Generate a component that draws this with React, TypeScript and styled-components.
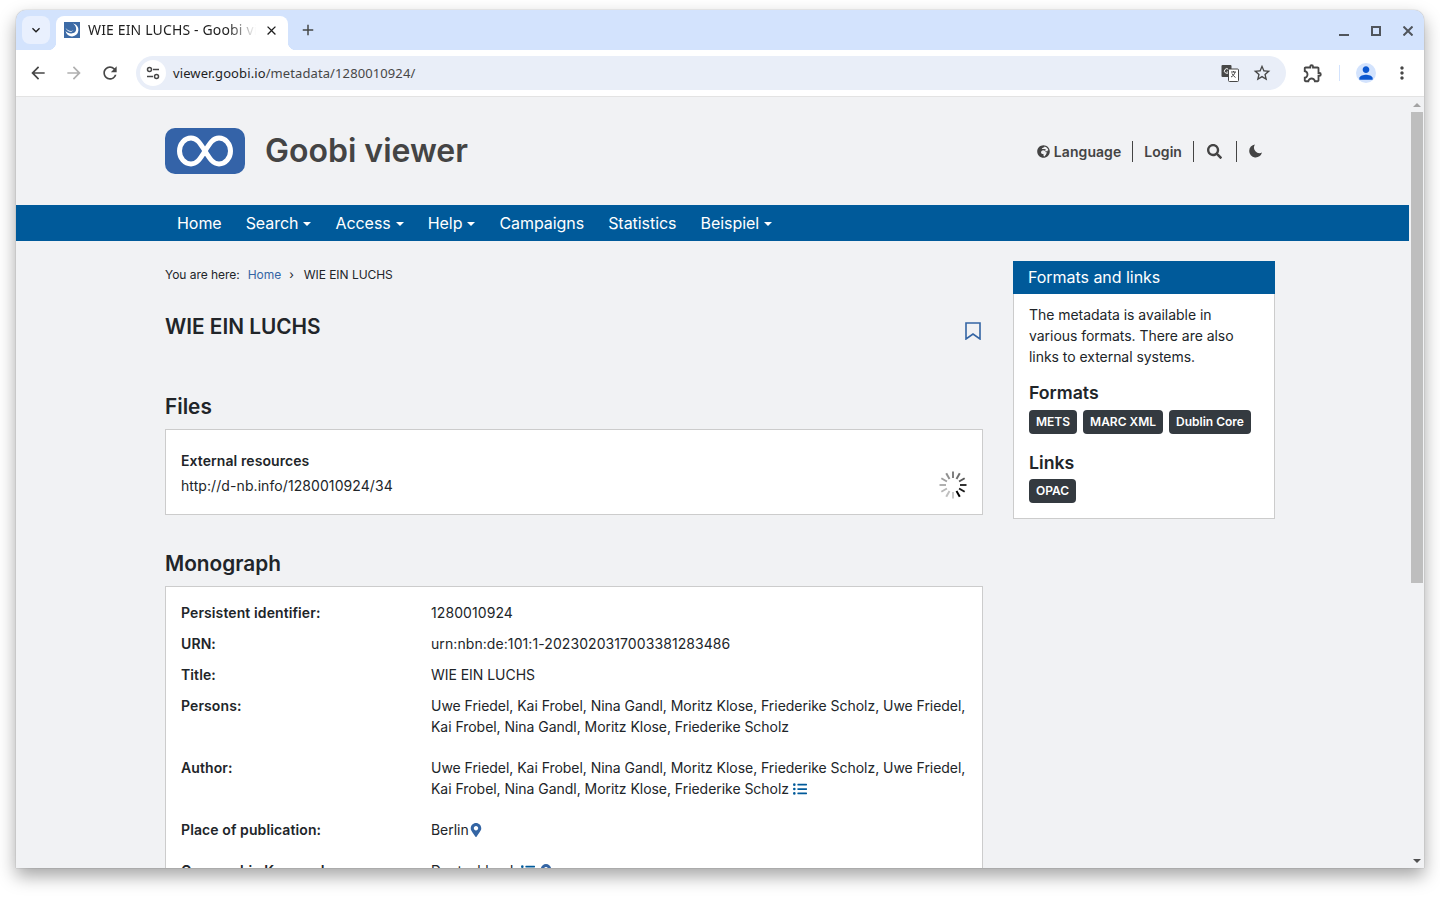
import React from 'react';
import styled, { createGlobalStyle } from 'styled-components';
import { FaGlobeAfrica, FaSearch, FaListUl, FaMapMarkerAlt } from 'react-icons/fa';
import { MdArrowBack, MdArrowForward, MdRefresh, MdStarBorder, MdOutlineExtension, MdPerson, MdMoreVert, MdClose, MdAdd, MdKeyboardArrowDown } from 'react-icons/md';

const GlobalStyle = createGlobalStyle`
    html, body {
        height: 100%;
        margin: 0;
        padding: 0;
        background: #ffffff;
    }
    #root {
        height: 100%;
        padding-top: 10px;
    }
    * {
        box-sizing: border-box;
    }
`;

const BrowserWindow = styled.div`
    width: 1408px;
    height: 858px;
    margin: 0 16px;
    display: flex;
    flex-direction: column;
    border-radius: 10px 10px 0 0;
    overflow: hidden;
    background: #f1f2f4;
    box-shadow: 0 0 1px rgba(0, 0, 0, 0.5), 0 8px 18px rgba(0, 0, 0, 0.36);
`;

const TabStrip = styled.div`
    height: 40px;
    flex: none;
    display: flex;
    align-items: flex-start;
    padding: 6px 0 0 6px;
    background: #d3e3fd;
    font-family: "Noto Sans", sans-serif;
`;

const TabSearch = styled.div`
    width: 28px;
    height: 28px;
    display: flex;
    align-items: center;
    justify-content: center;
    border-radius: 8px;
    background: #e9f0fe;
    color: #1f1f1f;
    font-size: 16px;
`;

const Tab = styled.div`
    position: relative;
    width: 232px;
    height: 34px;
    margin-left: 6px;
    padding: 0 8px 6px;
    display: flex;
    align-items: center;
    background: #ffffff;
    border-radius: 8px 8px 0 0;

    &::before,
    &::after {
        content: '';
        position: absolute;
        bottom: 0;
        width: 8px;
        height: 8px;
    }

    &::before {
        left: -8px;
        background: radial-gradient(circle at 0 0, #d3e3fd 8px, #ffffff 8.5px);
    }

    &::after {
        right: -8px;
        background: radial-gradient(circle at 100% 0, #d3e3fd 8px, #ffffff 8.5px);
    }
`;

const TabTitle = styled.span`
    width: 168px;
    margin: -2px 0 0 8px;
    font-size: 14px;
    letter-spacing: 0.15px;
    color: #1f1f1f;
    white-space: nowrap;
    overflow: hidden;
    mask-image: linear-gradient(to right, #000 140px, transparent 168px);
`;

const TabClose = styled.span`
    margin-left: 8px;
    display: flex;
    font-size: 15px;
    color: #1f1f1f;
`;

const NewTab = styled.span`
    margin: 5px 0 0 11px;
    display: flex;
    font-size: 18px;
    color: #444746;
`;

const WindowControls = styled.div`
    margin-left: auto;
    display: flex;
    gap: 22px;
    padding: 5px 11px 0 0;
    color: #50555c;
`;

const ControlIcon = styled.svg`
    width: 10px;
    height: 10px;
    display: block;
    margin: 5px 0;
    fill: none;
    stroke: currentColor;
    stroke-width: 2;
`;

const Toolbar = styled.div`
    height: 47px;
    flex: none;
    display: flex;
    align-items: center;
    padding: 0 0 1px 0;
    background: #ffffff;
    border-bottom: 1px solid #e3e3e3;
    color: #474747;
`;

const ToolButton = styled.span<{ $width?: number; $muted?: boolean; $large?: boolean }>`
    width: ${(p) => p.$width ?? 36}px;
    flex: none;
    display: flex;
    justify-content: center;
    font-size: ${(p) => (p.$large ? 22 : 20)}px;
    color: ${(p) => (p.$muted ? '#b0b0b0' : '#474747')};
`;

const MenuButton = styled(ToolButton)`
    margin-left: 4px;
`;

const NavButtons = styled.div`
    display: flex;
    padding-left: 4px;
`;

const Omnibox = styled.div`
    width: 1150px;
    height: 34px;
    flex: none;
    margin: 0 9px 0 8px;
    display: flex;
    align-items: center;
    padding: 0 14px 0 4px;
    border-radius: 17px;
    background: #e9eef8;
    font-family: "Noto Sans", sans-serif;
    font-size: 13px;
    letter-spacing: 0.1px;
`;

const SiteChip = styled.span`
    width: 26px;
    height: 26px;
    display: flex;
    align-items: center;
    justify-content: center;
    border-radius: 50%;
    background: #ffffff;
`;

const Url = styled.span`
    margin-left: 7px;
    color: #474747;

    b {
        font-weight: 400;
        color: #1f1f1f;
    }
`;

const OmniActions = styled.div`
    margin-left: auto;
    display: flex;
    align-items: center;
    gap: 13px;
`;

const ToolbarDivider = styled.span`
    width: 1px;
    height: 16px;
    flex: none;
    margin: 0 16px 0 8px;
    background: #d3e3fd;
`;

const Avatar = styled.span`
    width: 20px;
    height: 20px;
    flex: none;
    display: flex;
    align-items: flex-end;
    justify-content: center;
    overflow: hidden;
    border-radius: 50%;
    background: #d3e3fd;
    color: #0b57d0;
    font-size: 20px;
`;

const Viewport = styled.div`
    flex: 1;
    min-height: 0;
    display: flex;
`;

const Page = styled.div`
    width: 1393px;
    height: 771px;
    overflow: hidden;
    font-family: Inter, sans-serif;
    font-size: 14px;
    line-height: 21px;
    letter-spacing: -0.04px;
    color: #212529;
`;

const Scrollbar = styled.div`
    width: 15px;
    display: flex;
    flex-direction: column;
    align-items: center;
    background: #f1f2f4;
`;

const ScrollArrow = styled.span<{ $down?: boolean }>`
    width: 0;
    height: 0;
    margin: ${(p) => (p.$down ? 'auto 0 5px' : '6px 0 5px')};
    border-left: 4px solid transparent;
    border-right: 4px solid transparent;
    ${(p) => (p.$down ? 'border-top: 4px solid #505050;' : 'border-bottom: 4px solid #a3a3a3;')}
`;

const ScrollThumb = styled.span`
    width: 12px;
    height: 471px;
    background: #bebebe;
`;

const SiteHeader = styled.header`
    height: 108px;
    display: flex;
    align-items: center;
    padding: 0 133px 0 149px;
`;

const LogoBox = styled.svg`
    width: 80px;
    height: 46px;
    display: block;
`;

const SiteTitle = styled.div`
    margin-left: 20px;
    font-size: 32px;
    line-height: 40px;
    font-weight: 600;
    letter-spacing: 0;
    color: #444444;
`;

const HeaderLinks = styled.div`
    margin-left: auto;
    display: flex;
    align-items: center;
    font-weight: 600;
    letter-spacing: 0.06px;
    color: #444444;
`;

const HeaderLink = styled.span<{ $left?: number; $right?: number }>`
    height: 21px;
    display: flex;
    align-items: center;
    gap: 4px;
    padding: 0 ${(p) => p.$right ?? 11}px 0 ${(p) => p.$left ?? 11}px;
    border-left: 1px solid #444444;

    &:first-child {
        border-left: 0;
    }
`;

const MainNav = styled.nav`
    height: 36px;
    display: flex;
    align-items: center;
    padding-left: 149px;
    background: #005a9a;
    color: #ffffff;
    font-size: 16px;
    letter-spacing: -0.05px;
`;

const NavItem = styled.span<{ $caret?: boolean }>`
    padding: 0 12px;

    ${(p) =>
        p.$caret &&
        `&::after {
            content: '';
            display: inline-block;
            margin-left: 5px;
            vertical-align: 3px;
            border-top: 4px solid #ffffff;
            border-left: 4px solid transparent;
            border-right: 4px solid transparent;
        }`}
`;

const Content = styled.div`
    display: flex;
    gap: 30px;
    padding: 20px 134px 0 149px;
`;

const MainColumn = styled.main`
    width: 818px;
    flex: none;
`;

const Breadcrumb = styled.div`
    display: flex;
    height: 27px;
    align-items: center;
    font-size: 12px;
`;

const Crumb = styled.span<{ $link?: boolean; $gap: number }>`
    margin-left: ${(p) => p.$gap}px;
    color: ${(p) => (p.$link ? '#3465a4' : '#212529')};
`;

const TitleRow = styled.div`
    display: flex;
    justify-content: space-between;
    height: 80px;
    margin-top: 24px;
`;

const PageTitle = styled.h1`
    margin: 0;
    font-size: 20.8px;
    line-height: 30px;
    font-weight: 600;
    letter-spacing: 0;
`;

const BookmarkIcon = styled.svg`
    width: 16px;
    height: 18px;
    margin: 10px 2px 0 0;
    fill: none;
    stroke: #3465a4;
    stroke-width: 1.6;
`;

const SectionTitle = styled.h2`
    margin: 0 0 7px;
    font-size: 20.8px;
    line-height: 30px;
    font-weight: 600;
    letter-spacing: 0;
`;

const Card = styled.section`
    background: #ffffff;
    border: 1px solid #cccccc;
`;

const FilesCard = styled(Card)`
    height: 86px;
    margin-bottom: 34px;
    padding: 20px 15px 0;
    display: flex;
    justify-content: space-between;
`;

const FileLabel = styled.div`
    margin-bottom: 4px;
    font-weight: 600;
    letter-spacing: 0.08px;
`;

const DigitText = styled.div`
    letter-spacing: 0.08px;
`;

const Spinner = styled.svg`
    width: 28px;
    height: 28px;
    margin-top: 21px;
`;

const MetadataCard = styled(Card)`
    padding: 15px 15px 0;
    height: 400px;
`;

const Row = styled.div<{ $loose?: boolean }>`
    display: flex;
    margin-bottom: ${(p) => (p.$loose ? 20 : 10)}px;
`;

const RowLabel = styled.div`
    width: 250px;
    flex: none;
    font-weight: 600;
    letter-spacing: 0.1px;
`;

const RowValue = styled.div`
    flex: 1;
    white-space: nowrap;
`;

const ValueIcon = styled.span<{ $pin?: boolean }>`
    display: inline-block;
    margin-left: ${(p) => (p.$pin ? 0 : 4)}px;
    font-size: 14px;
    line-height: 1;
    vertical-align: -2px;
    color: ${(p) => (p.$pin ? '#3465a4' : '#005a9a')};
`;

const Sidebar = styled.aside`
    width: 262px;
    flex: none;
`;

const WidgetHead = styled.div`
    height: 33px;
    padding-left: 15px;
    display: flex;
    align-items: center;
    background: #005a9a;
    color: #ffffff;
    font-size: 16px;
`;

const WidgetBody = styled.div`
    height: 225px;
    padding: 10px 15px 0;
    background: #ffffff;
    border: 1px solid #cccccc;
    border-top: 0;
`;

const WidgetHeading = styled.h3<{ $after?: boolean }>`
    margin: ${(p) => (p.$after ? '18px 0 5px' : '15px 0 6px')};
    font-size: 17.7px;
    line-height: 22px;
    font-weight: 600;
    letter-spacing: 0;
`;

const BadgeRow = styled.div`
    display: flex;
    gap: 6px;
`;

const Badge = styled.span`
    height: 24px;
    padding: 0 7px 2px;
    display: flex;
    align-items: center;
    border-radius: 4px;
    background: #343a40;
    color: #ffffff;
    font-size: 12px;
    font-weight: 600;
    letter-spacing: 0;
`;

const NAV = [
    { label: 'Home' },
    { label: 'Search', caret: true },
    { label: 'Access', caret: true },
    { label: 'Help', caret: true },
    { label: 'Campaigns' },
    { label: 'Statistics' },
    { label: 'Beispiel', caret: true },
];

const PERSONS_1 = 'Uwe Friedel, Kai Frobel, Nina Gandl, Moritz Klose, Friederike Scholz, Uwe Friedel,';
const PERSONS_2 = 'Kai Frobel, Nina Gandl, Moritz Klose, Friederike Scholz';

const SPOKES = [
    { a: 150, c: '#000000' },
    { a: 120, c: '#1a1a1a' },
    { a: 90, c: '#333333' },
    { a: 60, c: '#555555' },
    { a: 30, c: '#707070' },
    { a: 0, c: '#808080' },
    { a: -30, c: '#909090' },
    { a: -60, c: '#a0a0a0' },
    { a: -90, c: '#b0b0b0' },
    { a: -120, c: '#b8b8b8' },
    { a: -150, c: '#c0c0c0' },
    { a: 180, c: '#c8c8c8' },
];

const Favicon = () => (
    <svg width="16" height="16" viewBox="0 0 16 16" style={{ flex: 'none' }}>
        <rect width="16" height="16" fill="#3d6ba6" />
        <path d="M9 1.500a6.500 6.500 0 1 1-7.500 7.500c2 2.500 7 3.500 9.500 1 2-2 1.500-6-2-8.500z" fill="#ffffff" />
        <path d="M1.500 5.500c1.500 3 6 4.500 8 2.500-2 3.500-7 1.500-8-2.500z" fill="#ffffff" />
    </svg>
);

const Tune = () => (
    <svg width="16" height="16" viewBox="0 0 16 16" fill="none" stroke="#474747" strokeWidth="1.5">
        <circle cx="4.500" cy="4.500" r="2" />
        <path d="M8 4.500h6M2 11.500h6" />
        <circle cx="11.500" cy="11.500" r="2" />
    </svg>
);

const Translate = () => (
    <svg width="18" height="18" viewBox="0 0 18 18">
        <rect x="0.500" y="1" width="10" height="12" rx="1" fill="#474747" />
        <path d="M7.500 5.500a2.300 2.300 0 1 0 .3 2.500h-2" fill="none" stroke="#ffffff" strokeWidth="1" />
        <rect x="7.500" y="5" width="10" height="12.500" rx="1" fill="#ffffff" stroke="#474747" />
        <path d="M10 8h5M12.500 7v1M14 8c-.5 2.500-2 4-4 5M11 9.500c.7 1.500 2 3 3.500 4" fill="none" stroke="#474747" />
    </svg>
);

const Moon = () => (
    <svg width="13" height="14" viewBox="0 0 13 14" fill="#444444">
        <path d="M6 .5A6.500 6.500 0 1 0 13 8.500 5.500 5.500 0 0 1 6 .5z" />
    </svg>
);

export default function App() {
    return (
        <>
            <GlobalStyle />
            <BrowserWindow>
                <TabStrip>
                    <TabSearch><MdKeyboardArrowDown /></TabSearch>
                    <Tab>
                        <Favicon />
                        <TabTitle>WIE EIN LUCHS - Goobi viewer</TabTitle>
                        <TabClose><MdClose /></TabClose>
                    </Tab>
                    <NewTab><MdAdd /></NewTab>
                    <WindowControls>
                        <ControlIcon viewBox="0 0 10 10"><path d="M0 9h10" /></ControlIcon>
                        <ControlIcon viewBox="0 0 10 10"><rect x="1" y="1" width="8" height="8" /></ControlIcon>
                        <ControlIcon viewBox="0 0 10 10"><path d="M0.500 0.500l9 9M9.500 0.500l-9 9" /></ControlIcon>
                    </WindowControls>
                </TabStrip>
                <Toolbar>
                    <NavButtons>
                        <ToolButton><MdArrowBack /></ToolButton>
                        <ToolButton $muted><MdArrowForward /></ToolButton>
                        <ToolButton><MdRefresh /></ToolButton>
                    </NavButtons>
                    <Omnibox>
                        <SiteChip><Tune /></SiteChip>
                        <Url><b>viewer.goobi.io</b>/metadata/1280010924/</Url>
                        <OmniActions>
                            <Translate />
                            <ToolButton $width={20} $large><MdStarBorder /></ToolButton>
                        </OmniActions>
                    </Omnibox>
                    <ToolButton $width={36} $large><MdOutlineExtension /></ToolButton>
                    <ToolbarDivider />
                    <Avatar><MdPerson /></Avatar>
                    <MenuButton $width={44}><MdMoreVert /></MenuButton>
                </Toolbar>
                <Viewport>
                    <Page>
                        <SiteHeader>
                            <LogoBox viewBox="0 0 80 46">
                                <rect width="80" height="46" rx="10" fill="#3463a8" />
                                <path
                                    d="M40 23C35 15 32 10 26 10a11.500 13 0 0 0 0 26c6 0 9-5 14-13s8-13 14-13a11.500 13 0 0 1 0 26c-6 0-9-5-14-13z"
                                    fill="none"
                                    stroke="#ffffff"
                                    strokeWidth="5"
                                />
                            </LogoBox>
                            <SiteTitle>Goobi viewer</SiteTitle>
                            <HeaderLinks>
                                <HeaderLink><FaGlobeAfrica size={13} />Language</HeaderLink>
                                <HeaderLink>Login</HeaderLink>
                                <HeaderLink $left={13} $right={14}><FaSearch size={15} /></HeaderLink>
                                <HeaderLink $left={12} $right={14}><Moon /></HeaderLink>
                            </HeaderLinks>
                        </SiteHeader>
                        <MainNav>
                            {NAV.map((item) => (
                                <NavItem key={item.label} $caret={item.caret}>{item.label}</NavItem>
                            ))}
                        </MainNav>
                        <Content>
                            <MainColumn>
                                <Breadcrumb>
                                    <Crumb $gap={0}>You are here:</Crumb>
                                    <Crumb $gap={8} $link>Home</Crumb>
                                    <Crumb $gap={8}>›</Crumb>
                                    <Crumb $gap={10}>WIE EIN LUCHS</Crumb>
                                </Breadcrumb>
                                <TitleRow>
                                    <PageTitle>WIE EIN LUCHS</PageTitle>
                                    <BookmarkIcon viewBox="0 0 16 18">
                                        <path d="M1 1h14v16l-7-5-7 5z" />
                                    </BookmarkIcon>
                                </TitleRow>
                                <SectionTitle>Files</SectionTitle>
                                <FilesCard>
                                    <div>
                                        <FileLabel>External resources</FileLabel>
                                        <DigitText>http://d-nb.info/1280010924/34</DigitText>
                                    </div>
                                    <Spinner viewBox="1 1 28 28">
                                        {SPOKES.map((s) => (
                                            <line
                                                key={s.a}
                                                x1="15"
                                                y1="8"
                                                x2="15"
                                                y2="1.500"
                                                stroke={s.c}
                                                strokeWidth="2"
                                                transform={`rotate(${s.a} 15 15)`}
                                            />
                                        ))}
                                    </Spinner>
                                </FilesCard>
                                <SectionTitle>Monograph</SectionTitle>
                                <MetadataCard>
                                    <Row><RowLabel>Persistent identifier:</RowLabel><RowValue><DigitText>1280010924</DigitText></RowValue></Row>
                                    <Row><RowLabel>URN:</RowLabel><RowValue><DigitText>urn:nbn:de:101:1-2023020317003381283486</DigitText></RowValue></Row>
                                    <Row><RowLabel>Title:</RowLabel><RowValue>WIE EIN LUCHS</RowValue></Row>
                                    <Row $loose>
                                        <RowLabel>Persons:</RowLabel>
                                        <RowValue>{PERSONS_1}<br />{PERSONS_2}</RowValue>
                                    </Row>
                                    <Row $loose>
                                        <RowLabel>Author:</RowLabel>
                                        <RowValue>
                                            {PERSONS_1}<br />{PERSONS_2}
                                            <ValueIcon><FaListUl /></ValueIcon>
                                        </RowValue>
                                    </Row>
                                    <Row $loose>
                                        <RowLabel>Place of publication:</RowLabel>
                                        <RowValue>Berlin<ValueIcon $pin><FaMapMarkerAlt /></ValueIcon></RowValue>
                                    </Row>
                                    <Row>
                                        <RowLabel>Geographic Keyword:</RowLabel>
                                        <RowValue>
                                            Deutschland{' '}
                                            <ValueIcon><FaListUl /></ValueIcon>{' '}
                                            <ValueIcon $pin><FaMapMarkerAlt /></ValueIcon>
                                        </RowValue>
                                    </Row>
                                </MetadataCard>
                            </MainColumn>
                            <Sidebar>
                                <WidgetHead>Formats and links</WidgetHead>
                                <WidgetBody>
                                    The metadata is available in various formats. There are also links to external systems.
                                    <WidgetHeading>Formats</WidgetHeading>
                                    <BadgeRow>
                                        <Badge>METS</Badge>
                                        <Badge>MARC XML</Badge>
                                        <Badge>Dublin Core</Badge>
                                    </BadgeRow>
                                    <WidgetHeading $after>Links</WidgetHeading>
                                    <BadgeRow>
                                        <Badge>OPAC</Badge>
                                    </BadgeRow>
                                </WidgetBody>
                            </Sidebar>
                        </Content>
                    </Page>
                    <Scrollbar>
                        <ScrollArrow />
                        <ScrollThumb />
                        <ScrollArrow $down />
                    </Scrollbar>
                </Viewport>
            </BrowserWindow>
        </>
    );
}
